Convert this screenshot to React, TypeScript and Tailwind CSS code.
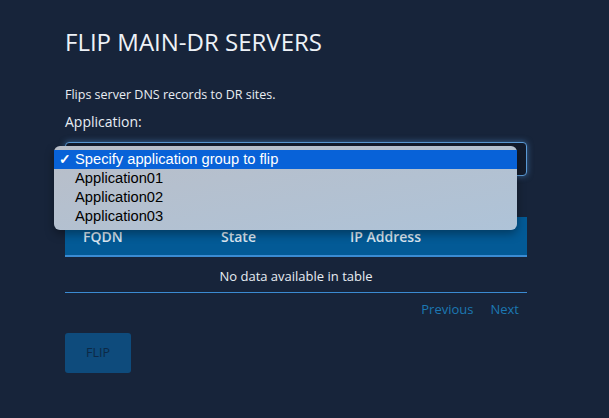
const options = ["Application01", "Application02", "Application03"];

export default function App() {
  return (
    <div
      className="min-h-[418px] w-full bg-[#17243a] text-[#e8edf3]"
      style={{ fontFamily: '"Open Sans", sans-serif' }}
    >
      <div className="ml-[65px] w-[462px] pt-[27px] pb-[45px]">
        <h1 className="text-[24px] leading-[29px] font-normal text-[#eef2f7]">FLIP MAIN-DR SERVERS</h1>

        <p className="mt-[30px] text-[12.5px] leading-[18px]">Flips server DNS records to DR sites.</p>

        <label className="mt-[8px] block text-[14px] leading-[20px]">Application:</label>

        {/* select with native menu open */}
        <div className="relative mt-[10px] h-[34px] rounded-[4px] border border-[#5b9ad6] bg-[#121b2c] shadow-[0_0_6px_rgba(90,160,230,0.55)]">
          <div
            className="absolute left-[-12px] top-[3px] z-10 w-[463px] rounded-[6px] bg-gradient-to-br from-[#b9bec8] to-[#aec3d8] py-[4px] text-[14.7px] leading-[19px] text-black shadow-[0_4px_10px_rgba(0,0,0,0.35)]"
            style={{ fontFamily: '"Liberation Sans", Arial, sans-serif' }}
          >
            <div className="flex h-[19px] items-center bg-[#0862d8] text-white">
              <span className="w-[21px] pl-[5px] text-[14px] font-bold">✓</span>
              <span>Specify application group to flip</span>
            </div>
            {options.map((o) => (
              <div key={o} className="flex h-[19px] items-center">
                <span className="w-[21px]" />
                <span>{o}</span>
              </div>
            ))}
          </div>
        </div>

        <div className="mt-[41px]">
          <div className="grid grid-cols-[138px_129px_1fr] border-b-2 border-[#3b8bd2] bg-[#035a96] px-[18px] pt-[10px] pb-[8px] text-[14px] leading-[20px] font-semibold text-[#dbe7f2]">
            <span>FQDN</span>
            <span>State</span>
            <span>IP Address</span>
          </div>
          <div className="border-b border-[#3b8bd2] pt-[10px] pb-[7px] text-center text-[13px] leading-[18px]">
            No data available in table
          </div>
          <div className="mt-[7px] flex justify-end gap-[17px] pr-[8px] text-[13px] leading-[18px] text-[#1c78b3]">
            <span>Previous</span>
            <span>Next</span>
          </div>
        </div>

        <button className="mt-[15px] h-[40px] w-[66px] rounded-[3px] bg-[#0e4b7c] text-[12.5px] text-[#0c2946]">
          FLIP
        </button>
      </div>
    </div>
  );
}
